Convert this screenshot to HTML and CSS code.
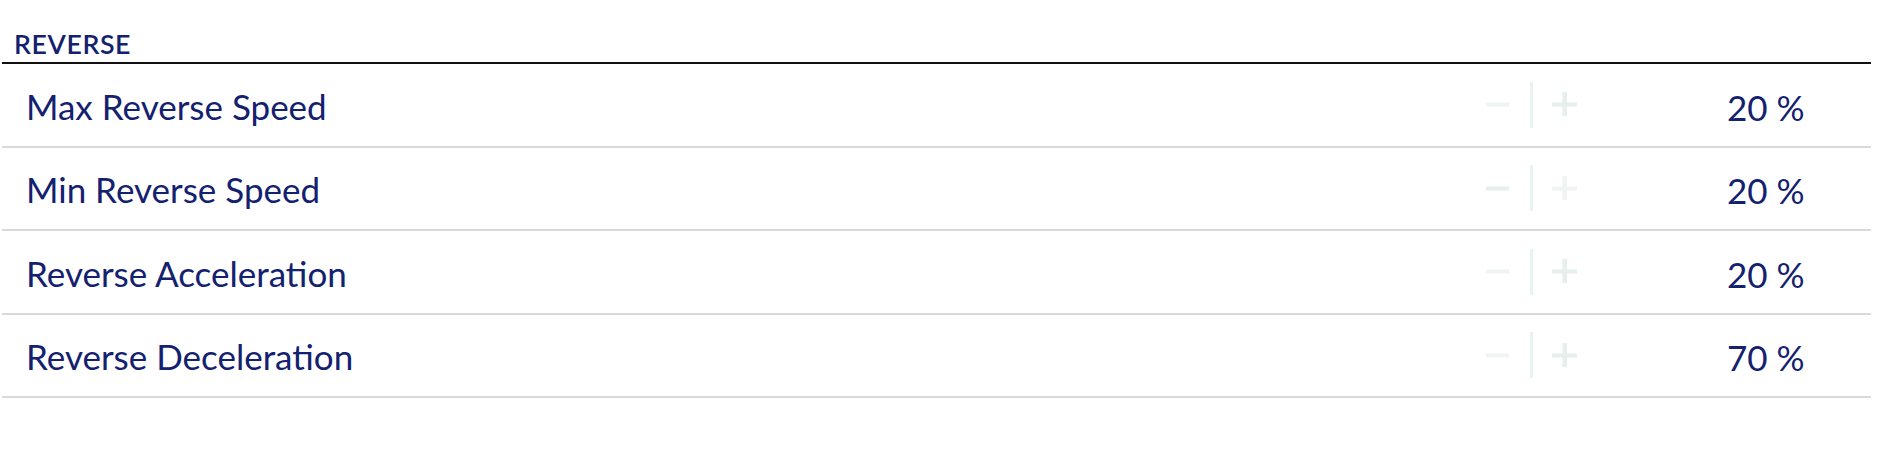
FILE: index.html
```html
<!DOCTYPE html>
<html lang="en">
<head>
  <meta charset="UTF-8" />
  <title>Reverse settings</title>
  <link rel="stylesheet" href="styles.css">
</head>
<body>
  <section class="settings-group">
    <h2 class="group-title">REVERSE</h2>
    <ul class="setting-list">
      <li class="setting-row">
        <span class="setting-name">Max Reverse Speed</span>
        <div class="stepper">
          <button class="step-btn faint" aria-label="Decrease">
            <svg class="icon" viewBox="0 0 25 25"><rect x="0" y="10.5" width="23" height="4"/></svg>
          </button>
          <span class="step-sep"></span>
          <button class="step-btn" aria-label="Increase">
            <svg class="icon" viewBox="0 0 25 25"><rect x="0" y="10.5" width="25" height="4"/><rect x="10.5" y="0" width="4.5" height="24"/></svg>
          </button>
        </div>
        <span class="setting-value">20 %</span>
      </li>
      <li class="setting-row">
        <span class="setting-name">Min Reverse Speed</span>
        <div class="stepper">
          <button class="step-btn" aria-label="Decrease">
            <svg class="icon" viewBox="0 0 25 25"><rect x="0" y="10.5" width="23" height="4"/></svg>
          </button>
          <span class="step-sep"></span>
          <button class="step-btn faint" aria-label="Increase">
            <svg class="icon" viewBox="0 0 25 25"><rect x="0" y="10.5" width="25" height="4"/><rect x="10.5" y="0" width="4.5" height="24"/></svg>
          </button>
        </div>
        <span class="setting-value">20 %</span>
      </li>
      <li class="setting-row">
        <span class="setting-name">Reverse Acceleration</span>
        <div class="stepper">
          <button class="step-btn faint" aria-label="Decrease">
            <svg class="icon" viewBox="0 0 25 25"><rect x="0" y="10.5" width="23" height="4"/></svg>
          </button>
          <span class="step-sep"></span>
          <button class="step-btn" aria-label="Increase">
            <svg class="icon" viewBox="0 0 25 25"><rect x="0" y="10.5" width="25" height="4"/><rect x="10.5" y="0" width="4.5" height="24"/></svg>
          </button>
        </div>
        <span class="setting-value">20 %</span>
      </li>
      <li class="setting-row">
        <span class="setting-name">Reverse Deceleration</span>
        <div class="stepper">
          <button class="step-btn faint" aria-label="Decrease">
            <svg class="icon" viewBox="0 0 25 25"><rect x="0" y="10.5" width="23" height="4"/></svg>
          </button>
          <span class="step-sep"></span>
          <button class="step-btn" aria-label="Increase">
            <svg class="icon" viewBox="0 0 25 25"><rect x="0" y="10.5" width="25" height="4"/><rect x="10.5" y="0" width="4.5" height="24"/></svg>
          </button>
        </div>
        <span class="setting-value">70 %</span>
      </li>
    </ul>
  </section>
</body>
</html>
```

FILE: styles.css
```css
:root {
  --navy: #13216f;
  --rule: #d9d9d9;
  --step: #e5efec;
  --step-faint: #f0f5f4;
}

* {
  margin: 0;
  padding: 0;
  box-sizing: border-box;
}

body {
  background: #ffffff;
  font-family: 'Lato', 'Liberation Sans', sans-serif;
  color: var(--navy);
}

.settings-group {
  width: 1869px;
  margin-left: 2px;
  padding-top: 28px;
}

.group-title {
  font-size: 26.7px;
  font-weight: 600;
  letter-spacing: 0.6px;
  line-height: 32px;
  padding: 0 0 2px 12px;
  border-bottom: 2px solid #111111;
}

.setting-list {
  list-style: none;
}

.setting-row {
  display: flex;
  align-items: center;
  height: 83.5px;
  padding-left: 24px;
  border-bottom: 2px solid var(--rule);
}

.setting-name {
  flex: 1;
  font-size: 35px;
  line-height: 42px;
  padding-top: 2px;
}

.stepper {
  display: flex;
  align-items: center;
  gap: 19px;
  margin-right: 150px;
}

.step-btn {
  display: flex;
  border: none;
  background: none;
  color: var(--step);
  cursor: pointer;
}

.step-btn.faint {
  color: var(--step-faint);
}

.icon {
  width: 25px;
  height: 25px;
  fill: currentColor;
}

.step-sep {
  width: 3.5px;
  height: 46px;
  background-color: #e8f2ef;
}

.setting-value {
  width: 144px;
  font-size: 35px;
  line-height: 42px;
  padding-top: 4px;
}
```
